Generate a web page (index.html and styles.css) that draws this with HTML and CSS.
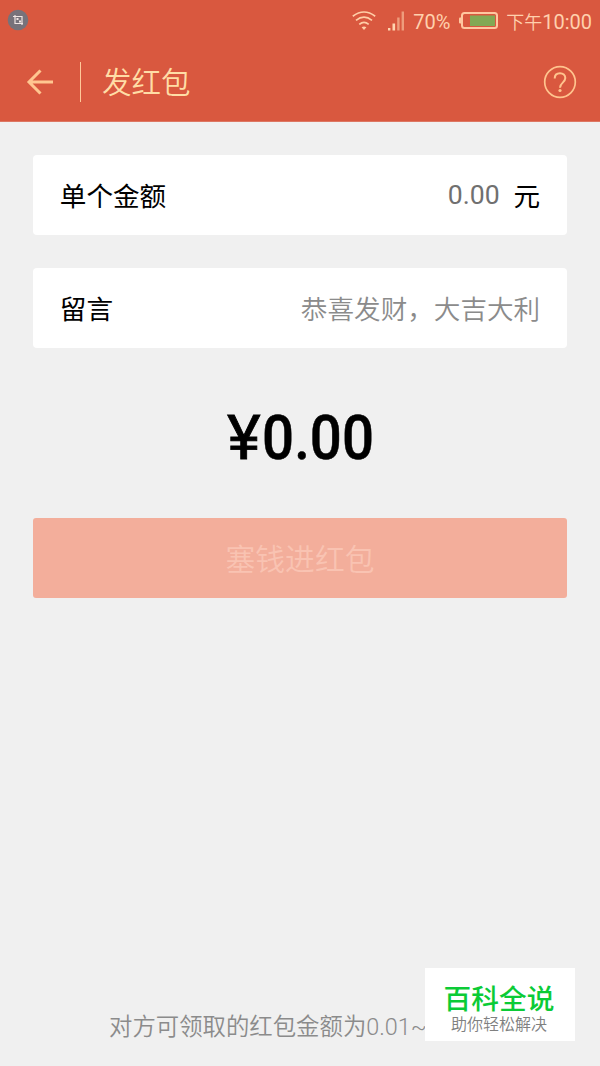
FILE: index.html
```html
<!DOCTYPE html>
<html lang="zh-CN">
<head>
<meta charset="utf-8">
<title>发红包</title>
<link rel="stylesheet" href="styles.css">
</head>
<body>
<div class="screen">
  <header class="top">
    <div class="status">
      <svg class="notice" width="22" height="22" viewBox="0 0 22 22">
        <circle cx="11" cy="11" r="10.3" fill="#77727a"/>
        <path d="M8 6v8.500h8M6 7.500h9V16" fill="none" stroke="#f0e4e2" stroke-width="1.200"/>
        <path d="M9.500 9h2v2h-2zM12 11.500h2v2h-2z" fill="#f0e4e2"/>
      </svg>
      <div class="indicators">
        <svg class="wifi" width="24" height="20" viewBox="0 0 24 20" fill="none" stroke="#ffcfa8" stroke-width="1.7">
          <path d="M.8 5.2Q12-3.2 23.2 5.2M4 9.4q8-6.4 16 0M7.3 13.4q4.7-4 9.4 0"/>
          <path d="M9.6 16.2q2.4-1.6 4.8 0L12 19z" fill="#ffcfa8" stroke="none"/>
        </svg>
        <svg class="signal" width="17" height="20" viewBox="0 0 17 20">
          <path d="M0 17h2.4v2.5H0zM4.5 12.5h2.6v7H4.5z" fill="#ffd5b0"/>
          <path d="M9.2 6.5h2.4v13H9.2zM13.6.5H16v19h-2.4z" fill="#ee9c7c"/>
        </svg>
        <span class="percent">70%</span>
        <svg class="battery" width="40" height="18" viewBox="0 0 40 18">
          <rect x="3" y="1" width="35" height="15" rx="2.5" fill="none" stroke="#ffc7a0" stroke-width="2"/>
          <rect x="0" y="5.500" width="3" height="6" rx="1" fill="#ffc7a0"/>
          <rect x="11" y="3.5" width="25" height="10.5" fill="#82a954"/>
        </svg>
        <span class="clock"><span class="period">下午</span>10:00</span>
      </div>
    </div>
    <div class="bar">
      <svg class="back" width="28" height="26" viewBox="0 0 28 26" fill="none" stroke="#ffc690" stroke-width="3">
        <path d="M14.5 1.5 3 13l11.500 11.500M3 13h24"/>
      </svg>
      <span class="divider"></span>
      <h1 class="title">发红包</h1>
      <svg class="help" width="34" height="34" viewBox="0 0 34 34" fill="none" stroke="#ffc48e">
        <circle cx="17" cy="17" r="15.300" stroke-width="1.700"/>
        <path d="M11.700 13.500c0-3.300 2.200-5.300 5.300-5.300s5.300 2 5.300 4.900c0 4.500-5.300 4.600-5.300 9.600" stroke-width="2"/>
        <circle cx="17" cy="25.500" r="1.600" fill="#ffc48e" stroke="none"/>
      </svg>
    </div>
  </header>
  <main class="form">
    <div class="field">
      <span class="label">单个金额</span>
      <span class="amount">0.00</span>
      <span class="unit">元</span>
    </div>
    <div class="field">
      <span class="label">留言</span>
      <span class="message">恭喜发财，大吉大利</span>
    </div>
    <div class="total"><span class="yen">¥</span><span class="sum">0.00</span></div>
    <button class="submit">塞钱进红包</button>
  </main>
  <p class="hint">对方可领取的红包金额为<span class="range">0.01~</span></p>
  <aside class="badge">
    <strong class="badge-name">百科全说</strong>
    <span class="badge-slogan">助你轻松解决</span>
  </aside>
</div>
</body>
</html>
```

FILE: styles.css
```css
* { box-sizing: border-box; }
body {
  margin: 0;
  background: #f0f0f0;
  font-family: Roboto, "Noto Sans CJK SC", sans-serif;
}
.screen {
  position: relative;
  display: flex;
  flex-direction: column;
  width: 600px;
  height: 1066px;
  overflow: hidden;
  white-space: nowrap;
}
.top {
  height: 122px;
  background: #d9583f;
  border-bottom: 1px solid #dd7763;
}
.status {
  display: flex;
  justify-content: space-between;
  height: 42px;
  padding: 0 8px 0 7px;
  color: #ffd0ad;
  font-size: 20px;
  line-height: 44px;
}
.notice { margin-top: 9px; }
.indicators { display: flex; }
.wifi { margin: 11px 12px 0 0; }
.signal { margin: 11px 8px 0 0; }
.percent { width: 37px; margin-right: 9px; }
.battery { margin: 12px 7px 0 0; }
.clock { display: flex; }
.period { padding-top: 1px; font-size: 18px; font-weight: 350; }
.bar {
  display: flex;
  align-items: center;
  height: 80px;
  padding: 0 23px 1px 26px;
}
.divider {
  width: 1px;
  height: 40px;
  margin: 0 21px 0 26px;
  background: #ffc99a;
}
.title {
  flex: 1;
  margin: 0;
  padding-top: 2px;
  color: #ffdda6;
  font-size: 29.5px;
  font-weight: 350;
  line-height: 40px;
}
.form {
  display: flex;
  flex-direction: column;
  padding: 32.5px 33.3px 0;
}
.field {
  display: flex;
  align-items: center;
  height: 80px;
  margin-bottom: 33.5px;
  padding: 0 26.5px 1px;
  border-radius: 4px;
  background: #fff;
  color: #000;
  font-size: 26.6px;
}
.label { flex: 1; }
.amount { margin-right: 14px; padding-top: 1px; color: #707070; }
.message { padding-bottom: 1px; color: #8b8b8b; font-weight: 350; }
.total {
  display: flex;
  justify-content: space-between;
  width: 147px;
  height: 80px;
  margin: 16px auto 40px;
  font-size: 61px;
  font-weight: 500;
  line-height: 80px;
}
.yen {
  font-weight: 400;
  transform: scaleX(1.05);
  transform-origin: left;
  -webkit-text-stroke: .8px #000;
}
.sum {
  transform: scaleX(.925);
  transform-origin: right;
  -webkit-text-stroke: .5px #000;
}
.total .yen, .total .sum { flex: none; }
.total .sum { margin-left: -6px; }
.submit {
  height: 80px;
  padding: 0 0 2px;
  border: 0;
  border-radius: 3px;
  background: #f3ae9b;
  color: #f9c3b2;
  font: 350 29.8px "Noto Sans CJK SC", sans-serif;
}
.hint {
  margin: auto 0 22px 109px;
  color: #8b8b8b;
  font-size: 23.4px;
  font-weight: 350;
  line-height: 34px;
}
.range { font-weight: 350; }
.badge {
  position: absolute;
  left: 425px;
  top: 968px;
  display: flex;
  flex-direction: column;
  align-items: center;
  width: 150px;
  height: 73px;
  padding: 15px 2px 0 0;
  background: #fff;
}
.badge-name {
  color: #0bcb36;
  font-size: 27.7px;
  font-weight: 500;
  line-height: 33px;
}
.badge-slogan {
  color: #808080;
  font-size: 16px;
  font-weight: 350;
  line-height: 17px;
}
```
